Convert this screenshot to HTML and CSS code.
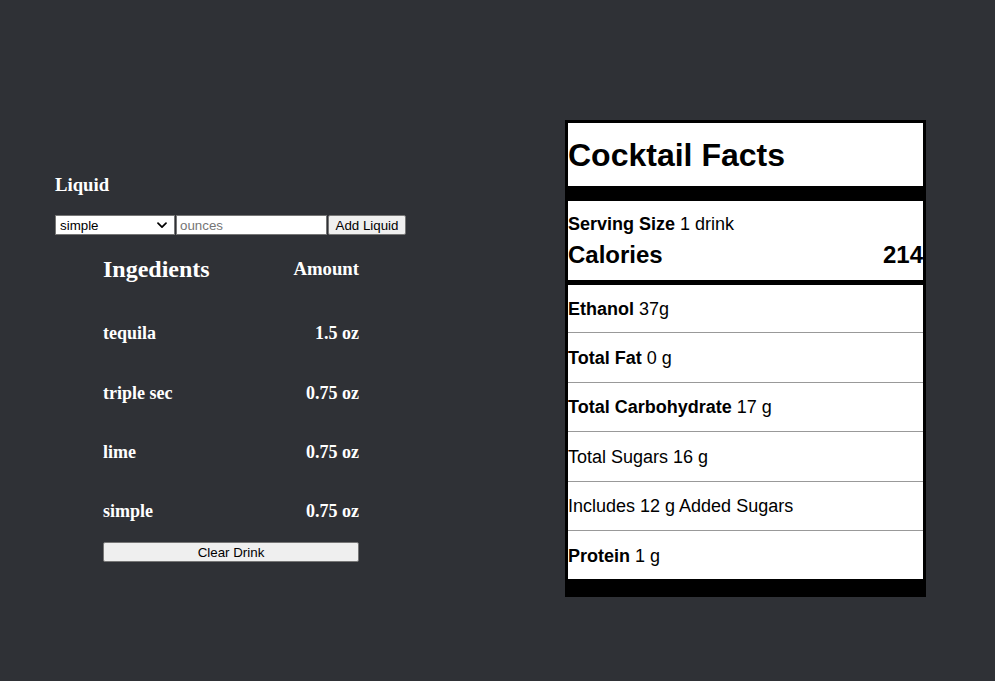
FILE: index.html
```html
<!DOCTYPE html>
<html lang="en">
<head>
<meta charset="utf-8">
<title>Cocktail Facts</title>
<link rel="stylesheet" href="styles.css">
</head>
<body>
<main class="page">
  <section class="builder">
    <h3 class="builder-title">Liquid</h3>
    <form class="liquid-form">
      <span class="select-wrap">
        <select class="liquid-select">
          <option>simple</option>
          <option>tequila</option>
          <option>triple sec</option>
          <option>lime</option>
        </select>
        <svg class="chevron" viewBox="0 0 10 7" aria-hidden="true"><path d="M1 1.2 L5 5.2 L9 1.2" fill="none" stroke="#000" stroke-width="1.7" stroke-linecap="round" stroke-linejoin="round"/></svg>
      </span>
      <input class="ounces" type="text" placeholder="ounces">
      <button class="btn add-btn" type="button">Add Liquid</button>
    </form>
    <div class="drink">
      <div class="drink-head"><span class="head-name">Ingedients</span><span class="head-amount">Amount</span></div>
      <div class="drink-row"><span>tequila</span><span>1.5 oz</span></div>
      <div class="drink-row"><span>triple sec</span><span>0.75 oz</span></div>
      <div class="drink-row"><span>lime</span><span>0.75 oz</span></div>
      <div class="drink-row"><span>simple</span><span>0.75 oz</span></div>
      <button class="btn clear-btn" type="button">Clear Drink</button>
    </div>
  </section>
  <section class="facts">
    <h1 class="facts-title">Cocktail Facts</h1>
    <div class="facts-serving">
      <div class="serving-size"><b>Serving Size</b> 1 drink</div>
      <div class="calories"><span>Calories</span><span>214</span></div>
    </div>
    <div class="fact-rows">
      <div class="fact-row"><b>Ethanol</b>&nbsp;37g</div>
      <div class="fact-row"><b>Total Fat</b>&nbsp;0 g</div>
      <div class="fact-row"><b>Total Carbohydrate</b>&nbsp;17 g</div>
      <div class="fact-row">Total Sugars 16 g</div>
      <div class="fact-row">Includes 12 g Added Sugars</div>
      <div class="fact-row"><b>Protein</b>&nbsp;1 g</div>
    </div>
  </section>
</main>
</body>
</html>
```
FILE: styles.css
```css
html, body {
  margin: 0;
  background: #2f3136;
}
body {
  font-family: "Liberation Serif", "Times New Roman", serif;
  color: #fff;
  min-height: 681px;
}
.page {
  display: flex;
  align-items: flex-start;
  padding-left: 55px;
  gap: 159px;
}
.builder {
  width: 351px;
  padding-top: 174px;
}
.builder-title {
  margin: 0;
  font-size: 18.72px;
  line-height: 22px;
  font-weight: bold;
}
.liquid-form {
  display: flex;
  gap: 1px;
  margin: 19px 0 0;
  height: 20px;
}
.select-wrap {
  position: relative;
  width: 120px;
  height: 20px;
}
.liquid-select {
  appearance: none;
  -webkit-appearance: none;
  width: 120px;
  height: 20px;
  box-sizing: border-box;
  border: 1px solid #767676;
  border-radius: 0;
  background: #fff;
  color: #000;
  font: 13.33px "Liberation Sans", Arial, sans-serif;
  padding: 0 0 0 4px;
  margin: 0;
}
.chevron {
  position: absolute;
  right: 8px;
  top: 7px;
  width: 10px;
  height: 7px;
  pointer-events: none;
}
.ounces {
  width: 151px;
  height: 20px;
  box-sizing: border-box;
  border: 1px solid #767676;
  border-radius: 0;
  padding: 0 3px;
  margin: 0;
  font: 13.33px "Liberation Sans", Arial, sans-serif;
  color: #000;
  background: #fff;
}
.ounces::placeholder {
  color: #757575;
}
.btn {
  background: #efefef;
  border: 1px solid #767676;
  border-radius: 2px;
  color: #000;
  font: 13.33px "Liberation Sans", Arial, sans-serif;
  height: 20px;
  box-sizing: border-box;
  padding: 0 6px;
  margin: 0;
}
.add-btn {
  width: 78px;
}
.drink {
  margin-left: 48px;
  width: 256px;
}
.drink-head {
  display: flex;
  justify-content: space-between;
  align-items: center;
  height: 68px;
  font-weight: bold;
}
.head-name {
  font-size: 24px;
}
.head-amount {
  font-size: 18.72px;
}
.drink-row {
  display: flex;
  justify-content: space-between;
  align-items: center;
  height: 59.5px;
  box-sizing: border-box;
  padding-top: 2px;
  font-size: 18px;
  font-weight: bold;
}
.drink-row:nth-child(5) {
  padding-top: 0;
}
.clear-btn {
  display: block;
  width: 256px;
  margin-top: 1px;
}
.facts {
  width: 355px;
  margin-top: 120px;
  border: 3px solid #000;
  background: #fff;
  color: #000;
  font-family: "Liberation Sans", Arial, Helvetica, sans-serif;
}
.facts-title {
  margin: 0;
  display: flex;
  align-items: center;
  padding-top: 1px;
  box-sizing: border-box;
  font-size: 32px;
  font-weight: bold;
  border-bottom: 15px solid #000;
  height: 78px;
}
.facts-serving {
  height: 84px;
  box-sizing: border-box;
  padding-top: 12px;
  border-bottom: 5px solid #000;
}
.serving-size {
  font-size: 18px;
  line-height: 22px;
}
.calories {
  display: flex;
  justify-content: space-between;
  font-size: 24px;
  line-height: 28px;
  font-weight: bold;
  margin-top: 6px;
}
.fact-rows {
  border-bottom: 15px solid #000;
}
.fact-row {
  height: 49.5px;
  box-sizing: border-box;
  display: flex;
  align-items: center;
  padding-top: 2px;
  font-size: 18px;
}
.fact-row:first-child {
  height: 47px;
}
.fact-row:last-child {
  height: 49px;
}
.fact-row + .fact-row {
  border-top: 1px solid #999;
}
```
